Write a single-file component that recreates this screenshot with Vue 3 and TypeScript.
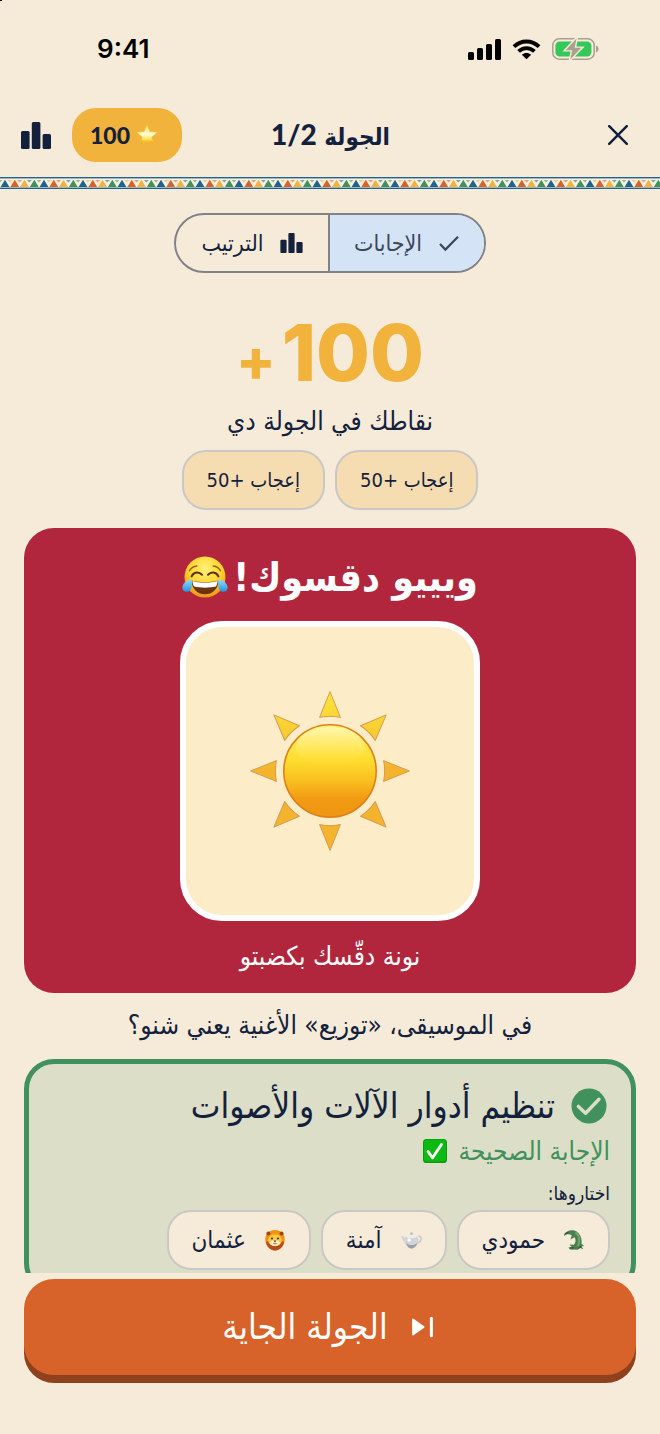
<script setup lang="ts">
import { ref } from 'vue'

type Tab = 'answers' | 'ranking'
type Avatar = 'croc' | 'teapot' | 'lion'

interface Player {
  name: string
  avatar: Avatar
}

const activeTab = ref<Tab>('answers')
const roundPoints = 100
const bonuses: string[] = ['إعجاب +50', 'إعجاب +50']
const players: Player[] = [
  { name: 'حمودي', avatar: 'croc' },
  { name: 'آمنة', avatar: 'teapot' },
  { name: 'عثمان', avatar: 'lion' },
]
const rays: number[] = [0, 45, 90, 135, 180, 225, 270, 315]
</script>

<template>
  <div class="screen" dir="rtl" lang="ar">
    <div class="status" dir="ltr">
      <span class="clock">9:41</span>
      <span class="status-icons">
        <svg width="33" height="21" viewBox="0 0 33 21" aria-hidden="true">
          <rect x="0" y="13" width="6" height="8" rx="1.6" />
          <rect x="9" y="9" width="6" height="12" rx="1.6" />
          <rect x="18" y="5" width="6" height="16" rx="1.6" />
          <rect x="27" y="0" width="6" height="21" rx="1.6" />
        </svg>
        <svg width="29" height="21" viewBox="0 0 30 21" aria-hidden="true">
          <g fill="none" stroke="#000" stroke-width="4">
            <path d="M2 7.6 C9.4 0.4 20.6 0.4 28 7.6" />
            <path d="M6.8 12.4 C11.5 7.9 18.5 7.9 23.2 12.4" />
          </g>
          <path d="M15 20.6 L10.2 15.9 C12.9 13.4 17.1 13.4 19.8 15.9 Z" />
        </svg>
        <svg width="47" height="22" viewBox="0 0 47 22" aria-hidden="true">
          <rect x="0.8" y="0.8" width="41.4" height="20.4" rx="6.5" fill="none" stroke="#ab9f91" stroke-width="1.5" />
          <path d="M44 7.5 C47.4 8.6 47.4 13.4 44 14.5 Z" fill="#ab9f91" />
          <rect x="3.4" y="3.4" width="36" height="15.2" rx="4.2" fill="#34c759" />
          <path d="M24.5 0.5 L13.6 12.2 H20.2 L18.2 21.5 L29.4 9.8 H22.7 Z" fill="#ab9f91" stroke="#f6ebd9" stroke-width="2.8" paint-order="stroke" />
        </svg>
      </span>
    </div>

    <header class="topbar">
      <button class="icon-btn close" type="button" aria-label="إغلاق">
        <svg width="20" height="20" viewBox="0 0 20 20"><path d="M1.2 1.2 L18.8 18.8 M18.8 1.2 L1.2 18.8" fill="none" stroke="#14213d" stroke-width="2.5" stroke-linecap="round" /></svg>
      </button>
      <h1>الجولة <span class="num">1/2</span></h1>
      <div class="top-left">
        <span class="points">
          <svg width="22" height="22" viewBox="0 0 22 22" aria-hidden="true">
            <defs>
              <linearGradient id="star" x1="0" y1="0" x2="0" y2="1">
                <stop offset="0" stop-color="#ffe96b" /><stop offset="0.5" stop-color="#fffbd8" /><stop offset="0.72" stop-color="#ffe34a" /><stop offset="1" stop-color="#dc8d12" />
              </linearGradient>
            </defs>
            <path d="M11 0.8 L13.8 7.6 L21.4 8.3 L15.7 13.2 L17.8 20.7 L11 16.8 L4.2 20.7 L6.3 13.2 L0.6 8.3 L8.2 7.6 Z" fill="url(#star)" stroke="#f6c437" stroke-width="0.6" />
          </svg>
          <span>{{ roundPoints }}</span>
        </span>
        <button class="icon-btn" type="button" aria-label="لوحة الترتيب">
          <svg width="30" height="27" viewBox="0 0 30 27" fill="#14213d"><rect x="0" y="9" width="8.6" height="18" rx="1.5" /><rect x="10.8" y="0" width="8.6" height="27" rx="1.5" /><rect x="21.6" y="12" width="8.4" height="15" rx="1.5" /></svg>
        </button>
      </div>
    </header>

    <svg class="frieze" width="100%" height="12" aria-hidden="true">
      <defs>
        <pattern id="tiles" width="39" height="12" patternUnits="userSpaceOnUse">
          <rect width="39" height="12" fill="#f8efdf" />
          <path d="M7.4 3 H12.4 L9.9 5.6 Z" fill="#f2b33d" opacity="0.55" />
          <path d="M17.1 3 H22.1 L19.6 5.6 Z" fill="#d8632a" opacity="0.55" />
          <path d="M26.9 3 H31.9 L29.4 5.6 Z" fill="#1f6391" opacity="0.55" />
          <path d="M36.6 3 H39 V5.6 Z M0 3 H2.4 L0 5.6 Z" fill="#40915b" opacity="0.55" />
          <path d="M0.6 10 L5 2.8 L9.4 10 Z" fill="#1f6391" />
          <path d="M10.4 10 L14.8 2.8 L19.2 10 Z" fill="#d8632a" />
          <path d="M20.1 10 L24.5 2.8 L28.9 10 Z" fill="#f2b33d" />
          <path d="M29.9 10 L34.3 2.8 L38.7 10 Z" fill="#40915b" />
          <rect y="0" width="39" height="1.4" fill="#1f6391" />
          <rect y="10.6" width="39" height="1.4" fill="#1f6391" />
        </pattern>
      </defs>
      <rect width="100%" height="12" fill="url(#tiles)" />
    </svg>

    <main class="content">
      <div class="segmented">
        <button type="button" :class="{ active: activeTab === 'answers' }" :aria-pressed="activeTab === 'answers'" @click="activeTab = 'answers'">
          <svg width="22" height="24" viewBox="0 0 22 24" aria-hidden="true"><path d="M2 13 L7.4 18.6 L20 5.8" fill="none" stroke="currentColor" stroke-width="2.2" /></svg>
          <span>الإجابات</span>
        </button>
        <button type="button" :class="{ active: activeTab === 'ranking' }" :aria-pressed="activeTab === 'ranking'" @click="activeTab = 'ranking'">
          <svg width="23" height="20" viewBox="0 0 30 27" fill="currentColor" aria-hidden="true"><rect x="0" y="9" width="8.4" height="18" rx="1.5" /><rect x="10.8" y="0" width="8.4" height="27" rx="1.5" /><rect x="21.6" y="12" width="8.4" height="15" rx="1.5" /></svg>
          <span>الترتيب</span>
        </button>
      </div>

      <p class="score" dir="ltr"><span class="plus">+</span><span>{{ roundPoints }}</span></p>
      <p class="score-label">نقاطك في الجولة دي</p>
      <ul class="bonuses">
        <li v-for="(bonus, i) in bonuses" :key="i">{{ bonus }}</li>
      </ul>

      <section class="roast">
        <h2>
          <span>ويييو دقسوك!</span>
          <svg width="46" height="44" viewBox="0 0 46 44" aria-hidden="true">
            <defs>
              <radialGradient id="face" cx="0.5" cy="0.3" r="0.72">
                <stop offset="0" stop-color="#fff17a" /><stop offset="0.55" stop-color="#ffd52e" /><stop offset="1" stop-color="#ee9019" />
              </radialGradient>
              <linearGradient id="tear" x1="0" y1="0" x2="0" y2="1">
                <stop offset="0" stop-color="#8fdcff" /><stop offset="1" stop-color="#2395e2" />
              </linearGradient>
            </defs>
            <circle cx="23" cy="21" r="20.5" fill="url(#face)" />
            <path d="M7.6 14.6 C9.4 11.4 12 10.2 14.8 10 M38.4 14.6 C36.6 11.4 34 10.2 31.2 10" fill="none" stroke="#a85b12" stroke-width="1.5" stroke-linecap="round" />
            <path d="M9.6 20.4 C12 15.6 17 15.6 20 18.8 M36.4 20.4 C34 15.6 29 15.6 26 18.8" fill="none" stroke="#5e2f0d" stroke-width="2" stroke-linecap="round" />
            <path d="M9.4 24.4 C17 26.4 29 26.4 36.6 24.4 C36 33.4 30.4 38.2 23 38.2 C15.6 38.2 10 33.4 9.4 24.4 Z" fill="#6d330f" />
            <path d="M10.4 25 C18 27 28 27 35.6 25 C35.4 28 34.6 29.8 33.8 30.6 C28 32 18 32 12.2 30.6 C11.4 29.8 10.6 28 10.4 25 Z" fill="#fff" />
            <path d="M9.8 23.4 C3.6 24 0.4 28 0.4 31.8 C0.6 37 8.4 37.4 9.4 31.4 C9.8 28.4 10 25.8 9.8 23.4 Z" fill="url(#tear)" />
            <path d="M36.2 23.4 C42.4 24 45.6 28 45.6 31.8 C45.4 37 37.6 37.4 36.6 31.4 C36.2 28.4 36 25.8 36.2 23.4 Z" fill="url(#tear)" />
          </svg>
        </h2>
        <div class="portrait">
          <svg width="160" height="160" viewBox="0 0 160 160" role="img" aria-label="شمس">
            <defs>
              <linearGradient id="sun" x1="0" y1="0" x2="0" y2="1">
                <stop offset="0" stop-color="#fff07c" /><stop offset="0.38" stop-color="#ffdd2e" /><stop offset="0.62" stop-color="#f8bd20" /><stop offset="0.8" stop-color="#f29a12" /><stop offset="1" stop-color="#ef9613" />
              </linearGradient>
              <linearGradient id="ray" x1="0" y1="0" x2="0" y2="1">
                <stop offset="0" stop-color="#fbe83a" /><stop offset="0.17" stop-color="#f8d634" /><stop offset="0.5" stop-color="#f3b32c" /><stop offset="1" stop-color="#f5b32e" />
              </linearGradient>
              <linearGradient id="shine" x1="0" y1="0" x2="0" y2="1">
                <stop offset="0" stop-color="#fff8b8" stop-opacity="0.85" /><stop offset="1" stop-color="#ffe440" stop-opacity="0" />
              </linearGradient>
              <clipPath id="ray-shapes">
                <path v-for="angle in rays" :key="angle" d="M80 0.6 L90.4 26.4 C83.5 25 76.5 25 69.6 26.4 Z" :transform="`rotate(${angle} 80 80)`" />
              </clipPath>
            </defs>
            <rect width="160" height="160" fill="url(#ray)" clip-path="url(#ray-shapes)" />
            <path v-for="angle in rays" :key="angle" d="M80 0.6 L90.4 26.4 C83.5 25 76.5 25 69.6 26.4 Z" :transform="`rotate(${angle} 80 80)`" fill="none" stroke="#d99a52" stroke-width="1" stroke-linejoin="round" />
            <circle cx="80" cy="80" r="46.2" fill="url(#sun)" stroke="#dd8018" stroke-width="1.6" />
            <ellipse cx="80" cy="56" rx="34" ry="20" fill="url(#shine)" />
          </svg>
        </div>
        <p>نونة دقّسك بكضبتو</p>
      </section>

      <p class="question">في الموسيقى، «توزيع» الأغنية يعني شنو؟</p>

      <section class="answer">
        <h3>
          <svg width="36" height="36" viewBox="0 0 36 36" aria-hidden="true"><circle cx="18" cy="18" r="17.5" fill="#40915b" /><path d="M7.4 18.4 L14.6 25.2 L28 11.2" fill="none" stroke="#dcdec7" stroke-width="3.4" stroke-linecap="round" stroke-linejoin="round" /></svg>
          <span>تنظيم أدوار الآلات والأصوات</span>
        </h3>
        <p class="correct">
          <span>الإجابة الصحيحة</span>
          <svg width="24" height="24" viewBox="0 0 24 24" aria-hidden="true"><rect width="24" height="24" rx="3.6" fill="#0a9a10" /><rect x="1" y="0.8" width="22" height="21.6" rx="3" fill="#0dba12" /><path d="M5 12.6 L9.6 18.8 L18.4 5.4" fill="none" stroke="#fff" stroke-width="2.8" stroke-linecap="round" stroke-linejoin="round" /></svg>
        </p>
        <p class="picked">اختاروها:</p>
        <ul class="players">
          <li v-for="player in players" :key="player.name">
            <svg v-if="player.avatar === 'croc'" width="22" height="22" viewBox="0 0 22 22" aria-hidden="true">
              <path d="M1 5.4 C3 1.4 9.4 -0.2 13.6 2.4 C18 5.2 19.2 10.6 18.4 14.6 L21 17 L18.8 17.4 L20.2 20.4 L17 18.8 L14.8 20.8 L7 20.4 L5.4 18.4 L9 18.2 L6.4 15.4 L10.6 15.8 C12.8 14.2 13 10.2 11.6 8.2 L7.4 10.6 L8.8 6.6 C6.4 4.6 3.4 5 1 7 Z" fill="#4a7f50" />
              <path d="M12.6 3.4 C16.6 6.6 17 12 15 17" fill="none" stroke="#79a967" stroke-width="2" />
              <path d="M2 4.8 L5.6 3.6 M6.8 18.8 H11 M15.4 19.4 L18 17.4" stroke="#31543b" stroke-width="1.2" />
            </svg>
            <svg v-else-if="player.avatar === 'teapot'" width="22" height="22" viewBox="0 0 22 22" aria-hidden="true">
              <path d="M18 7.4 C22.4 6 22.4 13.2 16.8 14" fill="none" stroke="#c5c6ca" stroke-width="1.4" />
              <path d="M5.4 8.4 C8 5.4 15 5.4 17.8 8.4 C19.8 13.6 15.8 19.4 11.4 19.4 C7.6 19.4 5.4 16.6 4.4 13 C2.2 12 2.4 8.8 0.8 7.6 C3 6.4 4.2 9 5.4 8.4 Z" fill="#d3d4d8" />
              <path d="M6.2 13.4 C8.4 17 14.6 17 17.4 13.4 C16.6 17 14 19.4 11.4 19.4 C9 19.4 7 17.4 6.2 13.4 Z" fill="#9a9ea6" />
              <ellipse cx="11.6" cy="7.4" rx="5" ry="1.6" fill="#ececee" /><circle cx="11.6" cy="4.6" r="1.3" fill="#b9bac0" />
              <circle cx="9.2" cy="11" r="1.8" fill="#fafafa" />
            </svg>
            <svg v-else width="22" height="22" viewBox="0 0 22 22" aria-hidden="true">
              <path d="M11 1 C18 1 21.6 6.4 20.6 12 C19.8 17.4 15.6 21.6 11 21.6 C6.4 21.6 2.2 17.4 1.4 12 C0.4 6.4 4 1 11 1 Z" fill="#ef9414" />
              <path d="M2 12.6 H20 C19.4 18 15.4 21.6 11 21.6 C6.6 21.6 2.6 18 2 12.6 Z" fill="#b84a1d" />
              <circle cx="4.4" cy="4.4" r="2" fill="#9c4813" /><circle cx="17.6" cy="4.4" r="2" fill="#9c4813" />
              <ellipse cx="11" cy="11.2" rx="6.8" ry="6" fill="#ffc83d" />
              <ellipse cx="11" cy="14" rx="5" ry="3" fill="#fff0c8" />
              <circle cx="8" cy="9.6" r="1" fill="#2f1b0c" /><circle cx="14" cy="9.6" r="1" fill="#2f1b0c" />
              <path d="M9.6 11.6 H12.4 L11 13.4 Z M8.4 14.4 Q11 16 13.6 14.4" fill="#542812" />
            </svg>
            <span>{{ player.name }}</span>
          </li>
        </ul>
      </section>
    </main>

    <footer>
      <button class="next" type="button">
        <svg width="30" height="30" viewBox="0 0 30 30" aria-hidden="true"><path d="M5 7.4 L15.6 15 L5 22.6 Z" fill="#fff" stroke="#fff" stroke-width="1.8" stroke-linejoin="round" /><path d="M23.4 6.2 V23.8" stroke="#fff" stroke-width="3" stroke-linecap="round" /></svg>
        <span>الجولة الجاية</span>
      </button>
    </footer>
  </div>
</template>

<style>
body {
  background: #f6ebd9;
}
</style>

<style scoped>
.screen {
  position: relative;
  display: flex;
  flex-direction: column;
  height: 100vh;
  overflow: hidden;
  background: #f6ebd9;
  color: #14213d;
  font-family: "DejaVu Sans Condensed", "DejaVu Sans", sans-serif;
  font-size: 26px;
}

.screen::before {
  content: "";
  position: absolute;
  top: 0;
  left: 0;
  width: 2px;
  height: 1px;
  background: #000;
}

.screen * {
  box-sizing: border-box;
}

h1, h2, h3, p, ul {
  margin: 0;
  padding: 0;
  font-weight: 400;
}

ul {
  list-style: none;
}

button {
  margin: 0;
  padding: 0;
  border: 0;
  background: none;
  color: inherit;
  font: inherit;
  cursor: pointer;
}

svg {
  display: block;
  flex: none;
}

.status {
  flex: none;
  display: flex;
  justify-content: space-between;
  align-items: center;
  height: 93px;
  padding: 5px 61px 0 97px;
}

.clock {
  color: #000;
  font: 600 26px/32px Inter, sans-serif;
}

.status-icons {
  display: flex;
  align-items: center;
  gap: 11px;
}

.topbar {
  flex: none;
  display: grid;
  grid-template-columns: 1fr auto 1fr;
  align-items: center;
  height: 84px;
  padding: 0 20px 0 21px;
}

.icon-btn {
  display: flex;
}

.close {
  justify-self: start;
  padding: 12px;
}

h1 {
  font-size: 24px;
  font-weight: 700;
  line-height: 40px;
}

.num {
  font-family: Lato, sans-serif;
  font-size: 28px;
  font-weight: 900;
}

.top-left {
  display: flex;
  align-items: center;
  justify-content: flex-end;
  gap: 21px;
}

.points {
  display: flex;
  align-items: center;
  gap: 6px;
  height: 54px;
  padding: 0 24px 0 18px;
  border-radius: 24px;
  background: #f2b33d;
  font: 900 23px/32px Lato, sans-serif;
}

.frieze {
  flex: none;
}

.content {
  flex: 1;
  min-height: 0;
  overflow: auto;
  scrollbar-width: none;
  padding: 24px 24px 0;
}

.segmented {
  display: grid;
  grid-template-columns: 1fr 1fr;
  width: 312px;
  height: 60px;
  margin: 0 auto 40px;
  border: 2px solid #808289;
  border-radius: 30px;
  overflow: hidden;
}

.segmented button {
  display: flex;
  align-items: center;
  justify-content: center;
  gap: 16px;
  font-size: 23px;
}

.segmented button + button {
  border-right: 2px solid #808289;
}

.segmented .active {
  background: #d4e3f6;
  color: #3b4858;
}

.score {
  display: flex;
  align-items: baseline;
  justify-content: center;
  gap: 6px;
  height: 80px;
  color: #f2b33d;
  font: 800 78px/80px Inter, sans-serif;
}

.plus {
  font-size: 58px;
  line-height: 60px;
}

.score-label {
  margin: 8px 0 9px;
  line-height: 40px;
  text-align: center;
}

.bonuses {
  display: flex;
  justify-content: center;
  gap: 10px;
}

.bonuses li {
  height: 60px;
  padding: 0 23px;
  border: 2px solid #cac8c6;
  border-radius: 24px;
  background: #f5ddb1;
  font-size: 20px;
  line-height: 56px;
}

.roast {
  display: flex;
  flex-direction: column;
  align-items: center;
  margin-top: 18px;
  padding: 22px 24px 17px;
  border-radius: 30px;
  background: #b2263d;
  color: #fff;
}

.roast h2 {
  display: flex;
  align-items: center;
  gap: 5px;
  font-size: 39px;
  font-weight: 700;
  line-height: 56px;
}

.portrait {
  display: grid;
  place-items: center;
  width: 300px;
  height: 300px;
  margin: 15px 0;
  border: 6px solid #fff;
  border-radius: 42px;
  background: #fcedc8;
}

.roast p {
  line-height: 40px;
}

.question {
  margin: 12px 0 14px;
  line-height: 40px;
  text-align: center;
}

.answer {
  padding: 16px 21px 18px;
  border: 5px solid #40915b;
  border-radius: 30px;
  background: #dcdec7;
}

.answer h3 {
  display: flex;
  align-items: center;
  gap: 16px;
  padding-right: 3px;
  font-size: 35px;
  line-height: 52px;
}

.correct {
  display: flex;
  align-items: center;
  gap: 11px;
  color: #40915b;
  line-height: 38px;
}

.picked {
  margin-top: 6px;
  font-size: 19px;
  line-height: 34px;
}

.players {
  display: flex;
  gap: 10px;
}

.players li {
  display: flex;
  align-items: center;
  gap: 18px;
  height: 60px;
  padding: 0 23px;
  border: 2px solid #cac8c6;
  border-radius: 24px;
  background: #f6ebd9;
  font-size: 24px;
}

footer {
  flex: none;
  padding: 6px 24px 59px;
}

.next {
  display: flex;
  align-items: center;
  justify-content: center;
  gap: 20px;
  width: 100%;
  height: 96px;
  border-radius: 30px;
  background: #d8632a;
  box-shadow: 0 8px 0 #8f401c;
  color: #fff;
  font-size: 35px;
}
</style>
